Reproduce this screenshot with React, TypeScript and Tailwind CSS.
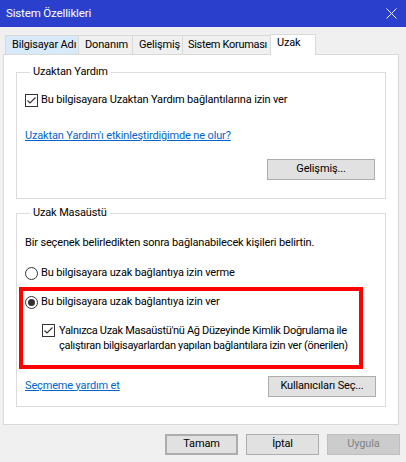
import type { ReactNode } from 'react'

const TABS = [
  { label: 'Bilgisayar Adı', w: 'w-[74px]', cls: 'bg-[#d8eaf9] pl-[6px]' },
  { label: 'Donanım', w: 'w-[55px]', cls: 'bg-[#f0f0f0] pl-[6px]' },
  { label: 'Gelişmiş', w: 'w-[51px]', cls: 'bg-[#f0f0f0] pl-[6px]' },
  { label: 'Sistem Koruması', w: 'w-[89px]', cls: 'bg-[#f0f0f0] pl-[5px] tracking-[-0.3px]' },
]

function CheckBox() {
  return (
    <span className="flex h-[13px] w-[13px] shrink-0 items-center justify-center border border-[#333333] bg-white">
      <svg width="11" height="11" viewBox="0 0 11 11" fill="none">
        <path d="M1.5 5.5 L4 8 L9.5 2.5" stroke="#333333" strokeWidth="1.2" />
      </svg>
    </span>
  )
}

function Radio({ checked }: { checked?: boolean }) {
  return (
    <span className="flex h-[13px] w-[13px] shrink-0 items-center justify-center rounded-full border border-[#333333] bg-white">
      {checked && <span className="h-[7px] w-[7px] rounded-full bg-[#333333]" />}
    </span>
  )
}

function Button({ children, className = '' }: { children: ReactNode; className?: string }) {
  return (
    <button className={`flex h-[21px] items-center justify-center border border-[#adadad] bg-[#e1e1e1] text-black ${className}`}>
      {children}
    </button>
  )
}

function Group({ title, children, className = '' }: { title: string; children: ReactNode; className?: string }) {
  return (
    <fieldset className={`border border-[#dcdcdc] px-[8px] ${className}`}>
      <legend className="ml-[5px] px-[3px] leading-[16px]">{title}</legend>
      {children}
    </fieldset>
  )
}

export default function App() {
  return (
    <div className="flex h-[462px] w-[406px] flex-col overflow-hidden whitespace-nowrap bg-[#f0f0f0] font-['Roboto','Liberation_Sans',Arial,sans-serif] text-[11px] tracking-[-0.15px] text-black">
      {/* Title bar */}
      <div className="flex h-[27px] shrink-0 items-center justify-between bg-[#2b3fcd] pl-[6px] pr-[9px] text-[11.5px] text-white">
        <span>Sistem Özellikleri</span>
        <svg width="11" height="11" viewBox="0 0 11 11" stroke="white" strokeWidth="1">
          <path d="M0.5 0.5 L10.5 10.5 M10.5 0.5 L0.5 10.5" />
        </svg>
      </div>

      {/* Tabs */}
      <div className="mt-[7px] flex h-[20px] items-end pl-[5px]">
        {TABS.map((t) => (
          <div
            key={t.label}
            className={`-mr-px flex h-[19px] items-center border border-b-0 border-[#d9d9d9] ${t.w} ${t.cls}`}
          >
            {t.label}
          </div>
        ))}
        <div className="relative z-10 -mb-px flex h-[21px] w-[46px] items-start border border-b-0 border-[#d9d9d9] bg-white pl-[6px]">
          Uzak
        </div>
      </div>

      {/* Tab panel */}
      <div className="ml-[3px] flex h-[371px] w-[396px] flex-col border border-[#d9d9d9] bg-white px-[12px] pt-[9px]">
        <Group title="Uzaktan Yardım" className="pb-[18px]">
          <label className="mt-[12px] flex h-[16px] items-center gap-[3px]">
            <CheckBox />
            <span>Bu bilgisayara Uzaktan Yardım bağlantılarına izin ver</span>
          </label>
          <a className="mt-[20px] block h-[16px] leading-[16px] text-[#0066cc] underline">
            Uzaktan Yardım'ı etkinleştirdiğimde ne olur?
          </a>
          <div className="mt-[15px] flex justify-end pr-[2px]">
            <Button className="w-[108px]">Gelişmiş...</Button>
          </div>
        </Group>

        <Group title="Uzak Masaüstü" className="mt-[6px] pb-[10px]">
          <p className="mt-[14px] h-[16px] leading-[16px]">
            Bir seçenek belirledikten sonra bağlanabilecek kişileri belirtin.
          </p>
          <label className="mt-[14px] flex h-[16px] items-center gap-[3px]">
            <Radio />
            <span>Bu bilgisayara uzak bağlantıya izin verme</span>
          </label>

          <div className="-ml-[6px] mt-[6px] w-[344px] border-4 border-[#ff0000] pb-[12px] pl-[2px] pt-[3px]">
            <label className="flex h-[16px] items-center gap-[3px]">
              <Radio checked />
              <span>Bu bilgisayara uzak bağlantıya izin ver</span>
            </label>
            <label className="mt-[13px] flex items-start gap-[4px] pl-[17px]">
              <span className="mt-[1px]">
                <CheckBox />
              </span>
              <span className="leading-[15px] tracking-[-0.3px]">
                Yalnızca Uzak Masaüstü'nü Ağ Düzeyinde Kimlik Doğrulama ile
                <br />
                çalıştıran bilgisayarlardan yapılan bağlantılara izin ver (önerilen)
              </span>
            </label>
          </div>

          <div className="mt-[7px] flex h-[20px] items-center justify-between pr-[1px]">
            <a className="text-[#0066cc] underline">Seçmeme yardım et</a>
            <Button className="h-[20px] w-[108px]">Kullanıcıları Seç...</Button>
          </div>
        </Group>
      </div>

      {/* Dialog buttons */}
      <div className="mt-[9px] flex justify-end gap-[8px] pr-[6px]">
        <Button className="w-[73px] border-2 border-[#0078d7]">Tamam</Button>
        <Button className="w-[73px]">İptal</Button>
        <button className="flex h-[21px] w-[73px] items-center justify-center border border-[#bfbfbf] bg-[#cccccc] text-[#838383]">
          Uygula
        </button>
      </div>
    </div>
  )
}
